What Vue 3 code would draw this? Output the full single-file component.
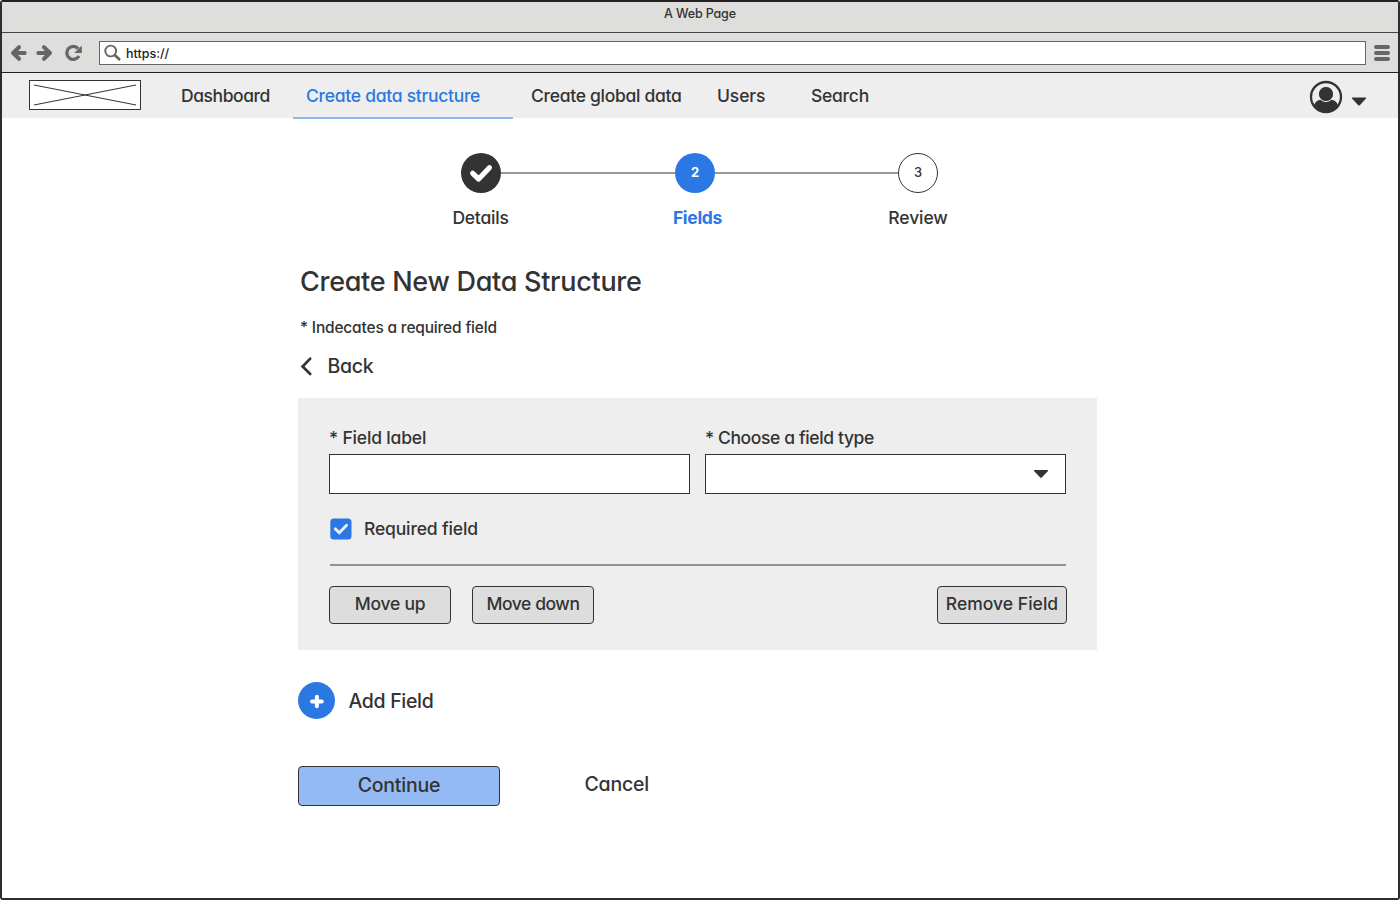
<script setup>
import { ref } from 'vue'

const tabs = [
  { label: 'Dashboard', cls: 'dashboard' },
  { label: 'Create data structure', cls: 'structure' },
  { label: 'Create global data', cls: 'global' },
  { label: 'Users', cls: 'users' },
  { label: 'Search', cls: 'search' }
]
const active = ref('structure')
const required = ref(true)
</script>

<template>
  <div class="window">
    <header class="titlebar"><span>A Web Page</span></header>

    <div class="toolbar">
      <svg class="history" width="98" height="38" viewBox="0 0 98 38">
        <g fill="none" stroke="#666" stroke-width="4" stroke-linecap="round" stroke-linejoin="round">
          <path d="M17 13.200 11 19 17 24.800M12 19H22.700" />
          <path d="M42 13.200 48 19 42 24.800M47 19H36.300" />
          <path d="M76.200 14.600A6.500 6.500 0 1 0 77 22" stroke-width="3.300" stroke-linecap="butt" />
        </g>
        <path d="M79.800 11.700V19H72.200Z" fill="#666" />
      </svg>
      <div class="address">
        <svg width="24" height="22" viewBox="0 0 24 22">
          <g fill="none" stroke="#666">
            <circle cx="10.700" cy="9" r="5.400" stroke-width="1.900" />
            <path d="M15 13.300 19.200 17.300" stroke-width="2.700" stroke-linecap="round" />
          </g>
        </svg>
        <span>https://</span>
      </div>
      <div class="menu"><i></i><i></i><i></i></div>
    </div>

    <nav class="nav">
      <svg class="logo" width="112" height="30" viewBox="0 0 112 30">
        <rect x=".5" y=".5" width="111" height="29" fill="#fff" stroke="#333" />
        <path d="M5 5 107 25M5 25 107 5" stroke="#333" stroke-width="1" />
      </svg>
      <a
        v-for="tab in tabs"
        :key="tab.cls"
        :class="['tab', tab.cls, { active: active === tab.cls }]"
        @click="active = tab.cls"
      >{{ tab.label }}</a>
      <svg class="user" width="58" height="34" viewBox="0 0 58 34">
        <defs>
          <clipPath id="avatar"><circle cx="17" cy="17" r="15" /></clipPath>
        </defs>
        <circle cx="17" cy="17" r="15" fill="#eee" stroke="#333" stroke-width="2.300" />
        <g clip-path="url(#avatar)">
          <path d="M3 33C4 25 6.500 20.500 11 20H23C27.500 20.500 30 25 31 33Z" fill="#333" />
          <circle cx="17" cy="14" r="7.600" fill="#333" stroke="#eee" stroke-width="1" />
        </g>
        <path d="M43.500 17.500H56.500Q57.600 17.800 57 18.600L51 25Q50 26 49 25L43 18.600Q42.400 17.800 43.500 17.500Z" fill="#333" />
      </svg>
    </nav>

    <main>
      <div class="stepper">
        <div class="step done">
          <div class="dot">
            <svg width="40" height="40" viewBox="0 0 40 40">
              <path d="M11.700 20.300 17.700 26 28.400 14.700" fill="none" stroke="#fff" stroke-width="5.200" stroke-linecap="round" stroke-linejoin="round" />
            </svg>
          </div>
          <span class="name details">Details</span>
        </div>
        <div class="line first"></div>
        <div class="step current">
          <div class="dot">2</div>
          <span class="name fields">Fields</span>
        </div>
        <div class="line"></div>
        <div class="step">
          <div class="dot">3</div>
          <span class="name review">Review</span>
        </div>
      </div>

      <h1>Create New Data Structure</h1>
      <p class="hint">* Indecates a required field</p>
      <a class="back">
        <svg width="14" height="20" viewBox="0 0 14 20">
          <path d="M11.200 2.600 3.600 10.500 11.200 18" fill="none" stroke="#333" stroke-width="2.700" stroke-linecap="round" />
        </svg>
        <span>Back</span>
      </a>

      <section class="card">
        <div class="fields-row">
          <label>
            <span class="flabel">* Field label</span>
            <div class="control"></div>
          </label>
          <label>
            <span class="ftype">* Choose a field type</span>
            <div class="control select">
              <svg width="16" height="10" viewBox="0 0 16 10">
                <path d="M1.500 1H14.500Q15.600 1.300 15 2.100L9 8.300Q8 9.300 7 8.300L1 2.100Q.4 1.300 1.500 1Z" fill="#333" />
              </svg>
            </div>
          </label>
        </div>
        <div class="check" @click="required = !required">
          <svg width="22" height="22" viewBox="0 0 22 22">
            <rect x=".3" y=".5" width="21.200" height="21" rx="3.500" fill="#2b78e4" />
            <path v-if="required" d="M5.300 10.900 9.300 14.700 16.600 7.300" fill="none" stroke="#eee" stroke-width="2.900" stroke-linecap="round" />
          </svg>
          <span>Required field</span>
        </div>
        <hr />
        <div class="actions">
          <button class="up">Move up</button>
          <button class="down">Move down</button>
          <button class="remove">Remove Field</button>
        </div>
      </section>

      <div class="add">
        <div class="plus">
          <svg width="37" height="37" viewBox="0 0 37 37">
            <path d="M14 19.500H23.800M18.900 14.800V24.200" stroke="#fff" stroke-width="4" stroke-linecap="round" />
          </svg>
        </div>
        <span>Add Field</span>
      </div>

      <div class="footer">
        <button class="continue">Continue</button>
        <a class="cancel">Cancel</a>
      </div>
    </main>
  </div>
</template>

<style>
body {
  background: #fff;
}
</style>

<style scoped>
* {
  box-sizing: border-box;
}
.window {
  width: 1400px;
  height: 900px;
  overflow: hidden;
  border: 2px solid #2d2c2e;
  border-top-color: #231f20;
  border-radius: 3px;
  background: #fff;
  color: #333;
  font-family: Inter, "Noto Sans", sans-serif;
  font-feature-settings: "cv11";
  font-size: 17.5px;
  font-weight: 500;
  line-height: 24px;
  white-space: nowrap;
}
.titlebar {
  height: 31px;
  background: #dededc;
  border-bottom: 1px solid #444;
  display: flex;
  justify-content: center;
  font-size: 12.5px;
  letter-spacing: -0.15px;
}
.titlebar span {
  height: 24px;
}
.toolbar {
  height: 40px;
  background: #dededc;
  border-bottom: 1px solid #222;
  display: flex;
  align-items: center;
}
.history {
  flex: none;
  margin-right: -1px;
}
.address {
  width: 1267px;
  height: 24px;
  background: #fff;
  border: 1px solid #666;
  display: flex;
  align-items: center;
  font-size: 12.5px;
  letter-spacing: 0;
  color: #222;
}
.address svg {
  margin-right: 2px;
}
.address span {
  padding-top: 2px;
}
.menu {
  margin-left: 8px;
  display: flex;
  flex-direction: column;
  gap: 2px;
}
.menu i {
  width: 16px;
  height: 4px;
  border-radius: 2px;
  background: #666;
}
.nav {
  height: 45px;
  background: #eee;
  display: flex;
  align-items: flex-start;
}
.logo {
  flex: none;
  margin: 7px 21px 0 27px;
}
.tab {
  height: 46px;
  line-height: 45px;
  cursor: pointer;
}
.dashboard {
  width: 131px;
  padding-left: 19px;
  letter-spacing: -0.43px;
}
.structure {
  width: 220px;
  padding-left: 13px;
  letter-spacing: -0.28px;
}
.global {
  width: 186px;
  padding-left: 18px;
  letter-spacing: -0.3px;
}
.users {
  width: 94px;
  padding-left: 18px;
  letter-spacing: -0.1px;
}
.search {
  padding-left: 18px;
  letter-spacing: -0.26px;
}
.tab.active {
  color: #2b78e4;
  border-bottom: 2px solid #8fb7f0;
}
.user {
  margin: 7px 31px 0 auto;
}
main {
  width: 799px;
  margin-left: 296px;
}
.stepper {
  width: 520px;
  margin: 35px 0 0 141px;
  display: flex;
}
.step {
  width: 40px;
  margin: 0 2px;
  display: flex;
  flex-direction: column;
  align-items: center;
}
.step:first-child {
  margin-left: 22px;
}
.dot {
  flex: none;
  width: 40px;
  height: 40px;
  border: 1.3px solid #333;
  border-radius: 50%;
  display: flex;
  align-items: center;
  justify-content: center;
  font-size: 13px;
  line-height: 38px;
  padding-bottom: 2px;
}
.done .dot {
  background: #333;
  border: 0;
  padding: 0;
}
.current .dot {
  background: #2b78e4;
  border: 0;
  color: #fff;
  font-weight: 700;
}
.name {
  margin-top: 13px;
}
.details {
  margin-left: -1px;
  letter-spacing: -0.22px;
}
.fields {
  margin-left: 5px;
  color: #2b78e4;
  font-weight: 700;
  letter-spacing: -0.3px;
}
.review {
  letter-spacing: -0.12px;
}
.line {
  width: 183px;
  height: 2px;
  margin: 19px -2px 0;
  background: #999;
}
.line.first {
  width: 174px;
}
h1 {
  margin: 34px 0 0 2px;
  font-size: 27px;
  font-weight: 500;
  line-height: 36px;
  letter-spacing: -0.29px;
}
.hint {
  margin: 16px 0 0 2px;
  font-size: 15.5px;
  letter-spacing: -0.18px;
}
.back {
  margin: 14px 0 0 0.5px;
  display: flex;
  align-items: center;
  font-size: 19.5px;
  letter-spacing: -0.3px;
}
.back span {
  margin-left: 15px;
}
.card {
  height: 252px;
  margin-top: 20px;
  padding: 28px 31px 0 31px;
  background: #eee;
}
.fields-row {
  display: flex;
  gap: 15px;
}
.fields-row label {
  width: 361px;
}
.flabel {
  letter-spacing: -0.17px;
}
.ftype {
  letter-spacing: -0.38px;
}
.control {
  height: 40px;
  margin-top: 4px;
  background: #fff;
  border: 1px solid #333;
}
.select {
  padding: 0 16px 0 0;
  display: flex;
  align-items: center;
  justify-content: flex-end;
}
.check {
  height: 24px;
  margin-top: 23px;
  display: flex;
  align-items: center;
  letter-spacing: -0.15px;
  cursor: pointer;
}
.check svg {
  margin: 0 12px 0 1px;
}
hr {
  height: 2px;
  margin: 23px 0 0 1px;
  border: 0;
  background: #929292;
}
.actions {
  margin: 20px -1px 0 0;
  display: flex;
}
button {
  height: 38px;
  padding: 0 0 3px;
  border: 1px solid #333;
  border-radius: 4px;
  background: #ddd;
  color: inherit;
  font: inherit;
  font-feature-settings: inherit;
}
.up {
  width: 122px;
  letter-spacing: -0.25px;
}
.down {
  width: 122px;
  letter-spacing: -0.45px;
  margin-left: 21px;
}
.remove {
  width: 130px;
  margin-left: auto;
  letter-spacing: 0.03px;
}
.add {
  margin-top: 32px;
  display: flex;
  align-items: center;
  font-size: 19.5px;
  letter-spacing: -0.32px;
}
.plus {
  width: 37px;
  height: 37px;
  margin-right: 13.5px;
  border-radius: 50%;
  background: #2b78e4;
}
.footer {
  margin-top: 47px;
  display: flex;
  font-size: 19.5px;
}
.continue {
  width: 202px;
  height: 40px;
  background: #93baf2;
  letter-spacing: -0.2px;
}
.cancel {
  margin-left: 84.5px;
  line-height: 37px;
  letter-spacing: -0.22px;
}
</style>
